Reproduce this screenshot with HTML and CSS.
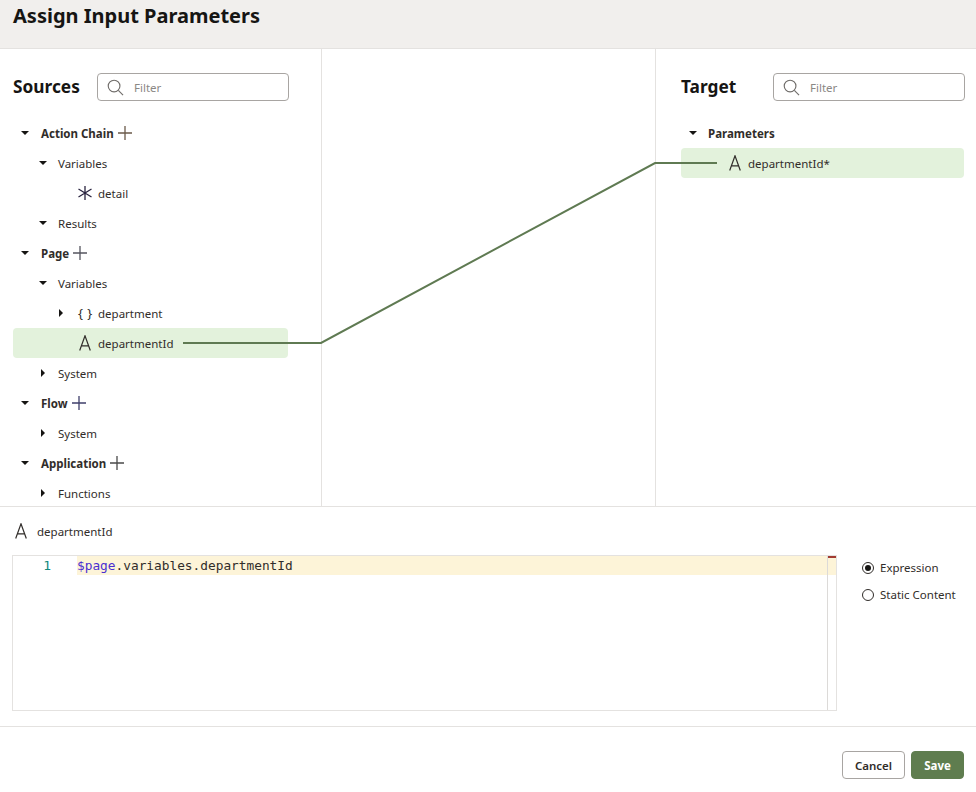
FILE: index.html
```html
<!DOCTYPE html>
<html lang="en">

<head>
    <meta charset="UTF-8">
    <title>Assign Input Parameters</title>
    <link rel="stylesheet" href="styles.css">
</head>

<body>
    <div class="dialog">
        <div class="dialog-header">
            <h1>Assign Input Parameters</h1>
        </div>

        <div class="mapper">
            <div class="panel panel-sources">
                <div class="panel-top">
                    <h2>Sources</h2>
                    <div class="filter">
                        <svg class="search-icon" viewBox="0 0 18 18"><circle cx="7.5" cy="7.5" r="6.2"/><path d="M12 12l5 5"/></svg>
                        <span>Filter</span>
                    </div>
                </div>
                <div class="tree">
                    <div class="row lvl0"><i class="arrow down"></i><b>Action Chain</b><svg class="plus" viewBox="0 0 14 14"><path d="M0 7h14M7 0v14" stroke="#6b5a4a"/></svg></div>
                    <div class="row lvl1"><i class="arrow down"></i><span>Variables</span></div>
                    <div class="row lvl2"><i class="arrow none"></i><svg class="star-icon" viewBox="0 0 14 14"><path d="M7 0v14M.5 3l13 8M13.5 3l-13 8"/></svg><span>detail</span></div>
                    <div class="row lvl1"><i class="arrow down"></i><span>Results</span></div>
                    <div class="row lvl0"><i class="arrow down"></i><b>Page</b><svg class="plus" viewBox="0 0 14 14"><path d="M0 7h14M7 0v14" stroke="#55555f"/></svg></div>
                    <div class="row lvl1"><i class="arrow down"></i><span>Variables</span></div>
                    <div class="row lvl2"><i class="arrow right"></i><span class="braces">{ }</span><span>department</span></div>
                    <div class="row lvl2 selected"><i class="arrow none"></i><svg class="type-icon" viewBox="0 0 12 16"><path d="M.7 15.5L6 .8l5.3 14.7M2.4 10.8h7.2"/></svg><span>departmentId</span></div>
                    <div class="row lvl1"><i class="arrow right"></i><span>System</span></div>
                    <div class="row lvl0"><i class="arrow down"></i><b>Flow</b><svg class="plus" viewBox="0 0 14 14"><path d="M0 7h14M7 0v14" stroke="#3f3f6b"/></svg></div>
                    <div class="row lvl1"><i class="arrow right"></i><span>System</span></div>
                    <div class="row lvl0"><i class="arrow down"></i><b>Application</b><svg class="plus" viewBox="0 0 14 14"><path d="M0 7h14M7 0v14" stroke="#4a4a4a"/></svg></div>
                    <div class="row lvl1"><i class="arrow right"></i><span>Functions</span></div>
                </div>
            </div>

            <div class="panel panel-middle"></div>

            <div class="panel panel-target">
                <div class="panel-top">
                    <h2>Target</h2>
                    <div class="filter">
                        <svg class="search-icon" viewBox="0 0 18 18"><circle cx="7.5" cy="7.5" r="6.2"/><path d="M12 12l5 5"/></svg>
                        <span>Filter</span>
                    </div>
                </div>
                <div class="tree">
                    <div class="row target-head"><i class="arrow down"></i><b>Parameters</b></div>
                    <div class="row target-item selected"><svg class="type-icon" viewBox="0 0 12 16"><path d="M.7 15.5L6 .8l5.3 14.7M2.4 10.8h7.2"/></svg><span>departmentId*</span></div>
                </div>
            </div>

            <!-- mapping line lies over the panels -->
            <svg class="links" width="976" height="457" viewBox="0 49 976 457">
                <path d="M183 343H321L655 163H717" fill="none" stroke="#5f7a52" stroke-width="2"/>
            </svg>
        </div>

        <div class="expr">
            <div class="expr-title">
                <svg class="type-icon" viewBox="0 0 12 16"><path d="M.7 15.5L6 .8l5.3 14.7M2.4 10.8h7.2"/></svg>
                <span>departmentId</span>
            </div>
            <div class="expr-body">
                <div class="editor">
                    <div class="code-line">
                        <span class="line-no">1</span>
                        <code><span class="tok-var">$page</span>.variables.departmentId</code>
                    </div>
                    <div class="ruler"><div class="ruler-mark"></div></div>
                </div>
                <div class="mode">
                    <label class="radio-row"><i class="radio on"></i>Expression</label>
                    <label class="radio-row"><i class="radio"></i>Static Content</label>
                </div>
            </div>
        </div>

        <div class="dialog-footer">
            <button class="btn">Cancel</button>
            <button class="btn btn-save">Save</button>
        </div>
    </div>
</body>

</html>
```

FILE: styles.css
```css
html,
body {
    margin: 0;
    height: 100%;
    background-color: #fff;
}

body {
    font-family: "Noto Sans", "Open Sans", sans-serif;
    font-size: 11.5px;
    color: #312d2a;
    overflow: hidden;
}

.dialog {
    display: flex;
    flex-direction: column;
    height: 792px;
}

.dialog-header {
    height: 48px;
    background-color: #f1efed;
    border-bottom: 1px solid #e4e2e0;
    padding-left: 13px;
    flex: none;
}

h1 {
    margin: 0;
    font-size: 20px;
    line-height: 32px;
    font-weight: 700;
    color: #161513;
}

.mapper {
    position: relative;
    display: flex;
    height: 457px;
    flex: none;
    border-bottom: 1px solid #e4e2e0;
}

.panel {
    height: 100%;
}

.panel-sources {
    width: 308px;
    border-right: 1px solid #e4e2e0;
    padding-left: 13px;
}

.panel-middle {
    width: 333px;
    border-right: 1px solid #e4e2e0;
}

.panel-target {
    flex: 1;
    padding-left: 25px;
}

.panel-top {
    display: flex;
    align-items: center;
    height: 28px;
    margin-top: 24px;
    margin-bottom: 17px;
}

h2 {
    margin: 0;
    font-size: 17.3px;
    font-weight: 700;
    color: #161513;
    line-height: 26px;
}

.panel-sources h2 {
    width: 84px;
}

.panel-target h2 {
    width: 92px;
}

.filter {
    width: 190px;
    height: 26px;
    border: 1px solid #a8a5a2;
    border-radius: 4px;
    display: flex;
    align-items: center;
    color: #8b8885;
}

.search-icon {
    width: 17px;
    height: 17px;
    margin-left: 9px;
    margin-right: 10px;
    fill: none;
    stroke: #6f6c69;
    stroke-width: 1.2;
}

.row {
    display: flex;
    align-items: center;
    height: 30px;
    width: 275px;
    box-sizing: border-box;
    border-radius: 4px;
    white-space: nowrap;
    line-height: 15px;
}

.row b {
    font-weight: 700;
}

.lvl0 {
    padding-left: 8px;
}

.lvl1 {
    padding-left: 26px;
}

.lvl2 {
    padding-left: 44px;
}

.arrow {
    display: block;
    width: 9px;
    height: 9px;
    margin-right: 10px;
    flex: none;
    position: relative;
}

.lvl0 .arrow {
    margin-right: 11px;
}

.arrow.down::before {
    content: "";
    position: absolute;
    left: 0;
    top: 2px;
    border-left: 4.5px solid transparent;
    border-right: 4.5px solid transparent;
    border-top: 4.5px solid #161513;
}

.arrow.right::before {
    content: "";
    position: absolute;
    left: 2px;
    top: 0;
    border-top: 4.5px solid transparent;
    border-bottom: 4.5px solid transparent;
    border-left: 4.5px solid #161513;
}

.plus {
    width: 14px;
    height: 14px;
    margin-left: 4px;
    fill: none;
    stroke-width: 1.3;
}

.type-icon {
    width: 12px;
    height: 16px;
    fill: none;
    stroke: #312d2a;
    stroke-width: 1.2;
    flex: none;
}

.lvl2 .type-icon {
    margin-left: 3px;
    margin-right: 7px;
}

.star-icon {
    width: 14px;
    height: 14px;
    margin-left: 2px;
    margin-right: 6px;
    fill: none;
    stroke: #2a2440;
    stroke-width: 1.3;
    flex: none;
}

.braces {
    width: 20px;
    margin-left: 2px;
    font-size: 13px;
    word-spacing: 1px;
    white-space: nowrap;
}

.selected {
    background-color: #e3f2dc;
}

.panel-target .row {
    width: 283px;
}

.target-head {
    padding-left: 8px;
}

.target-item {
    padding-left: 48px;
}

.target-item .type-icon {
    margin-right: 7px;
}

.links {
    position: absolute;
    left: 0;
    top: 0;
    pointer-events: none;
}

.expr {
    flex: none;
    height: 219px;
    border-bottom: 1px solid #e4e2e0;
    padding: 0 12px;
}

.expr-title {
    display: flex;
    align-items: center;
    height: 48px;
}

.expr-title .type-icon {
    margin-left: 3px;
    margin-right: 10px;
}

.expr-body {
    display: flex;
}

.editor {
    position: relative;
    width: 823px;
    height: 154px;
    border: 1px solid #e4e2e0;
}

.code-line {
    display: flex;
    align-items: center;
    height: 19px;
    font-family: "DejaVu Sans Mono", monospace;
}

.line-no {
    width: 64px;
    padding-right: 26px;
    box-sizing: border-box;
    text-align: right;
    color: #12897b;
    font-size: 13px;
}

.code-line code {
    flex: 1;
    height: 19px;
    line-height: 19px;
    font-size: 12.8px;
    background-color: #fdf4d8;
    color: #312d2a;
    font-family: "DejaVu Sans Mono", monospace;
}

.tok-var {
    color: #4a2fd0;
}

.ruler {
    position: absolute;
    top: 0;
    right: 8px;
    bottom: 0;
    width: 0;
    border-left: 1px solid #dcdad8;
}

.ruler-mark {
    width: 8px;
    height: 2px;
    background-color: #a23b32;
}

.mode {
    margin-left: 25px;
    margin-top: -1px;
}

.radio-row {
    display: flex;
    align-items: center;
    height: 27px;
}

.radio {
    display: block;
    width: 10px;
    height: 10px;
    border: 1px solid #312d2a;
    border-radius: 50%;
    margin-right: 6px;
    position: relative;
}

.radio.on::after {
    content: "";
    position: absolute;
    left: 2px;
    top: 2px;
    width: 6px;
    height: 6px;
    border-radius: 50%;
    background-color: #161513;
}

.dialog-footer {
    display: flex;
    justify-content: flex-end;
    gap: 6px;
    padding: 24px 12px 0 0;
}

.btn {
    height: 28px;
    width: 63px;
    padding: 0;
    border: 1px solid #a8a5a2;
    border-radius: 4px;
    background-color: #fff;
    color: #312d2a;
    font-family: "Noto Sans", "Open Sans", sans-serif;
    font-size: 11.5px;
    font-weight: 600;
}

.btn-save {
    width: 53px;
    background-color: #5f7d4f;
    border-color: #5f7d4f;
    color: #fff;
    font-weight: 700;
}
```
